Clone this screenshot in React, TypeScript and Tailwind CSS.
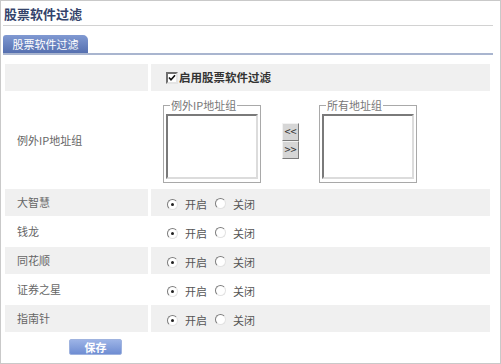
import React from 'react';

const FONT = { fontFamily: '"SimSun", "Noto Sans CJK SC", "Liberation Sans", sans-serif' };

const apps = ['大智慧', '钱龙', '同花顺', '证券之星', '指南针'];

const Radio = ({ checked }: { checked: boolean }) => (
  <span className="relative inline-block w-[11px] h-[11px] rounded-full border border-t-[#7d7d7d] border-l-[#7d7d7d] border-b-[#e2e2e2] border-r-[#e2e2e2] bg-white">
    {checked && (
      <span className="absolute left-[3px] top-[3px] w-[3px] h-[3px] rounded-full bg-[#222]" />
    )}
  </span>
);

const Checkbox = () => (
  <span className="inline-flex items-center justify-center w-[12px] h-[12px] border-2 border-t-[#6f6f6f] border-l-[#6f6f6f] border-b-[#e4e4e4] border-r-[#e4e4e4] bg-white">
    <svg width="8" height="8" viewBox="0 0 8 8">
      <path d="M1 3.5 L3 5.8 L7 1.2" stroke="#111" strokeWidth="1.6" fill="none" />
    </svg>
  </span>
);

const ListBox = ({ legend }: { legend: string }) => (
  <fieldset className="w-[98px] h-[84px] border border-[#a9a9a9] px-[2px] pb-[2px]">
    <legend className="ml-[4px] px-[1px] text-[11px] leading-[13px] text-[#777]">{legend}</legend>
    <div className="mt-[2px] h-[65px] border-2 border-t-[#7a7a7a] border-l-[#7a7a7a] border-b-[#dcdcdc] border-r-[#dcdcdc] bg-white" />
  </fieldset>
);

const MoveButton = ({ label }: { label: string }) => (
  <div className="w-[17px] h-[18px] flex items-center justify-center bg-[#d6d6d6] border border-t-[#f2f2f2] border-l-[#f2f2f2] border-b-[#7c7c7c] border-r-[#7c7c7c] text-[11px] leading-none text-[#333]">
    {label}
  </div>
);

export default function App() {
  return (
    <div
      className="w-[501px] h-[364px] border border-[#c9c9c9] bg-white pl-[2px] pr-[7px] overflow-hidden"
      style={FONT}
    >
      <div className="h-[25px] flex items-center pl-[1px] border-b border-[#d2d2d2]">
        <span className="text-[13px] font-bold text-[#34436b] leading-none">股票软件过滤</span>
      </div>

      <div className="mt-[9px] border-b-2 border-[#a9b5cf]">
        <div className="w-[85px] h-[18px] rounded-tl-[3px] rounded-tr-[5px] bg-gradient-to-b from-[#8099d2] to-[#5670b0] flex items-center justify-center text-white text-[11px] leading-none">
          股票软件过滤
        </div>
      </div>

      <div className="mt-[9px] ml-[2px] w-[485px] grid grid-cols-[143px_1fr] gap-x-[3px] gap-y-[1px] text-[11px] text-[#666]">
        <div className="h-[27px] bg-[#f0f0f0]" />
        <div className="h-[27px] bg-[#f0f0f0] pl-[15px] flex items-center gap-[1px]">
          <Checkbox />
          <span className="font-bold text-[#333] text-[11.5px]">启用股票软件过滤</span>
        </div>

        <div className="h-[96px] flex items-center pl-[12px]">例外IP地址组</div>
        <div className="h-[96px] pl-[12px] flex items-center pt-[1px]">
          <ListBox legend="例外IP地址组" />
          <div className="ml-[21px] flex flex-col">
            <MoveButton label="<<" />
            <MoveButton label=">>" />
          </div>
          <div className="ml-[20px]">
            <ListBox legend="所有地址组" />
          </div>
        </div>

        {apps.map((name, i) => {
          const bg = i % 2 === 0 ? 'bg-[#f0f0f0] h-[27px]' : 'bg-white h-[29px]';
          return (
            <React.Fragment key={name}>
              <div className={`${bg} flex items-center pl-[12px]`}>{name}</div>
              <div className={`${bg} flex items-center pl-[16px] pt-[3px] text-[#555]`}>
                <Radio checked />
                <span className="ml-[7px]">开启</span>
                <span className="ml-[8px]">
                  <Radio checked={false} />
                </span>
                <span className="ml-[7px]">关闭</span>
              </div>
            </React.Fragment>
          );
        })}
      </div>

      <div className="mt-[7px] ml-[66px] w-[53px] h-[16px] rounded-[2px] border border-[#9fb3df] bg-gradient-to-b from-[#9cb3e6] to-[#6f8dd2] flex items-center justify-center text-white font-bold text-[11px] leading-none">
        保存
      </div>
    </div>
  );
}
